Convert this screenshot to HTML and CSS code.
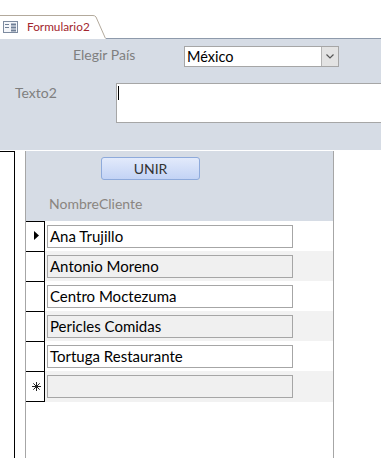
FILE: index.html
```html
<!DOCTYPE html>
<html lang="es">

<head>
    <meta charset="UTF-8">
    <title>Formulario2</title>
    <link rel="stylesheet" href="styles.css">
</head>

<body>
    <!-- Document tab -->
    <div class="tabbar">
        <div class="tab">
            <svg class="tab-icon" width="15" height="12" viewBox="0 0 15 12">
                <rect x="0.5" y="0.5" width="14" height="11" fill="#f4f6fa" stroke="#7d8ba0"/>
                <rect x="2" y="3" width="4" height="1" fill="#6f7f96"/>
                <rect x="8" y="2.5" width="5" height="2" fill="#6f7f96"/>
                <rect x="2" y="6" width="4" height="1" fill="#6f7f96"/>
                <rect x="8" y="5.5" width="5" height="2" fill="#6f7f96"/>
                <rect x="8" y="8.5" width="5" height="2" fill="#6f7f96"/>
            </svg>
            <span class="tab-title">Formulario2</span>
        </div>
        <svg class="tab-end" width="16" height="24" viewBox="0 0 16 24">
            <path d="M0 0.5 H3 Q5 0.5 6 2 L15.5 23.5" fill="#ffffff" stroke="#b3aa9c"/>
        </svg>
        <div class="tab-rest"></div>
    </div>

    <!-- Form header -->
    <div class="form-header">
        <div class="field-row country-row">
            <span class="label country-label">Elegir País</span>
            <div class="combo">
                <span class="combo-value">México</span>
                <span class="combo-button">
                    <svg width="8" height="5" viewBox="0 0 8 5">
                        <path d="M0.5 0.5 L4 4 L7.5 0.5" fill="none" stroke="#555" stroke-width="1.2"/>
                    </svg>
                </span>
            </div>
        </div>
        <div class="field-row text-row">
            <span class="label text-label">Texto2</span>
            <div class="textarea"><span class="caret"></span></div>
        </div>
    </div>

    <!-- Detail / subform -->
    <div class="detail">
        <div class="outer-selector"></div>
        <div class="gap"></div>
        <div class="subform">
            <div class="sub-header">
                <button class="btn-unir">UNIR</button>
                <div class="column-label">NombreCliente</div>
            </div>

            <div class="record">
                <div class="selector">
                    <svg width="6" height="9" viewBox="0 0 6 9"><path d="M0 0 L5 4.5 L0 9 Z" fill="#000"/></svg>
                </div>
                <div class="cell"><div class="input">Ana Trujillo</div></div>
            </div>
            <div class="record alt">
                <div class="selector"></div>
                <div class="cell"><div class="input">Antonio Moreno</div></div>
            </div>
            <div class="record">
                <div class="selector"></div>
                <div class="cell"><div class="input">Centro Moctezuma</div></div>
            </div>
            <div class="record alt">
                <div class="selector"></div>
                <div class="cell"><div class="input">Pericles Comidas</div></div>
            </div>
            <div class="record">
                <div class="selector"></div>
                <div class="cell"><div class="input">Tortuga Restaurante</div></div>
            </div>
            <div class="record alt new-record">
                <div class="selector">
                    <svg width="9" height="9" viewBox="0 0 9 9">
                        <path d="M4.5 0 V9 M0 4.5 H9 M1.3 1.3 L7.7 7.7 M7.7 1.3 L1.3 7.7" stroke="#222" stroke-width="1"/>
                    </svg>
                </div>
                <div class="cell"><div class="input"></div></div>
            </div>
        </div>
    </div>
</body>

</html>
```

FILE: styles.css
```css
/* Base */
body {
    margin: 0;
    background: #ffffff;
    font-family: 'Lato', 'Open Sans', sans-serif;
    font-size: 14px;
    color: #000000;
    overflow: hidden;
    height: 458px;
}

/* Tab bar */
.tabbar {
    display: flex;
    align-items: flex-end;
    height: 39px;
    padding-top: 15px;
    box-sizing: border-box;
}

.tab {
    display: flex;
    align-items: center;
    gap: 9px;
    flex: none;
    height: 24px;
    box-sizing: border-box;
    padding-left: 3px;
    padding-bottom: 2px;
    border-top: 1px solid #b3aa9c;
    background: #ffffff;
}

.tab-icon {
    flex: none;
}

.tab-title {
    flex: none;
    color: #a3262e;
    font-size: 11.8px;
}

.tab-end {
    display: block;
    flex: none;
}

.tab-rest {
    flex: 1;
    height: 0;
    border-bottom: 1px solid #8e9aab;
}

/* Form header */
.form-header {
    background: #d6dce5;
    height: 112px;
    box-sizing: border-box;
    border-bottom: 1px solid #ffffff;
    padding-top: 7px;
}

.field-row {
    display: flex;
    align-items: flex-start;
}

.label {
    flex: none;
    color: #7f7f7f;
    font-size: 14px;
}

.country-row {
    padding-left: 73px;
}

.country-label {
    width: 111px;
    line-height: 18px;
}

.combo {
    display: flex;
    flex: none;
    width: 155px;
    height: 21px;
    box-sizing: border-box;
    border: 1px solid #a6a6a6;
    background: #ffffff;
}

.combo-value {
    flex: 1;
    padding-left: 2px;
    line-height: 19px;
    font-size: 14.5px;
}

.combo-button {
    width: 16px;
    display: flex;
    align-items: center;
    justify-content: center;
    background: #e3e3e3;
    border-left: 1px solid #b4b4b4;
}

.text-row {
    margin-top: 16px;
    padding-left: 15px;
}

.text-label {
    width: 101px;
    line-height: 20px;
}

.textarea {
    flex: none;
    width: 280px;
    height: 40px;
    box-sizing: border-box;
    border: 1px solid #a6a6a6;
    background: #ffffff;
    padding: 2px 0 0 1px;
}

.caret {
    display: block;
    width: 1px;
    height: 14px;
    background: #000000;
}

/* Detail section */
.detail {
    display: flex;
    height: 307px;
}

.outer-selector {
    width: 15px;
    box-sizing: border-box;
    border-top: 1px solid #000000;
    border-right: 1px solid #000000;
}

.gap {
    width: 10px;
}

.subform {
    width: 309px;
    box-sizing: border-box;
    border-left: 1px solid #a6a6a6;
    border-right: 1px solid #a6a6a6;
}

.sub-header {
    background: #d6dce5;
    height: 70px;
    padding-top: 6px;
    box-sizing: border-box;
}

.btn-unir {
    display: block;
    margin-left: 75px;
    width: 99px;
    height: 23px;
    border: 1px solid #8eaadb;
    border-radius: 3px;
    background: linear-gradient(#e2eafb, #c3d3f5);
    color: #333333;
    font-family: 'Lato', sans-serif;
    font-size: 14px;
    padding: 0;
}

.column-label {
    margin: 15px 0 0 23px;
    color: #8a8580;
    font-size: 14px;
    line-height: 18px;
}

/* Records */
.record {
    display: flex;
    height: 30px;
}

.record.alt .cell {
    background: #f2f2f2;
}

.new-record {
    height: 31px;
}

.selector {
    width: 19px;
    box-sizing: border-box;
    border-top: 1px solid #000000;
    border-right: 1px solid #000000;
    background: #ffffff;
    padding: 4px 0 0 8px;
}

.new-record .selector {
    border-bottom: 1px solid #000000;
    padding: 5px 0 0 6px;
}

.cell {
    flex: 1;
    padding: 4px 0 0 2px;
}

.input {
    width: 246px;
    height: 23px;
    box-sizing: border-box;
    border: 1px solid #a6a6a6;
    background: #ffffff;
    padding-left: 2px;
    line-height: 21px;
    font-size: 15px;
}

.record.alt .input {
    background: #f0f0f0;
}
```
